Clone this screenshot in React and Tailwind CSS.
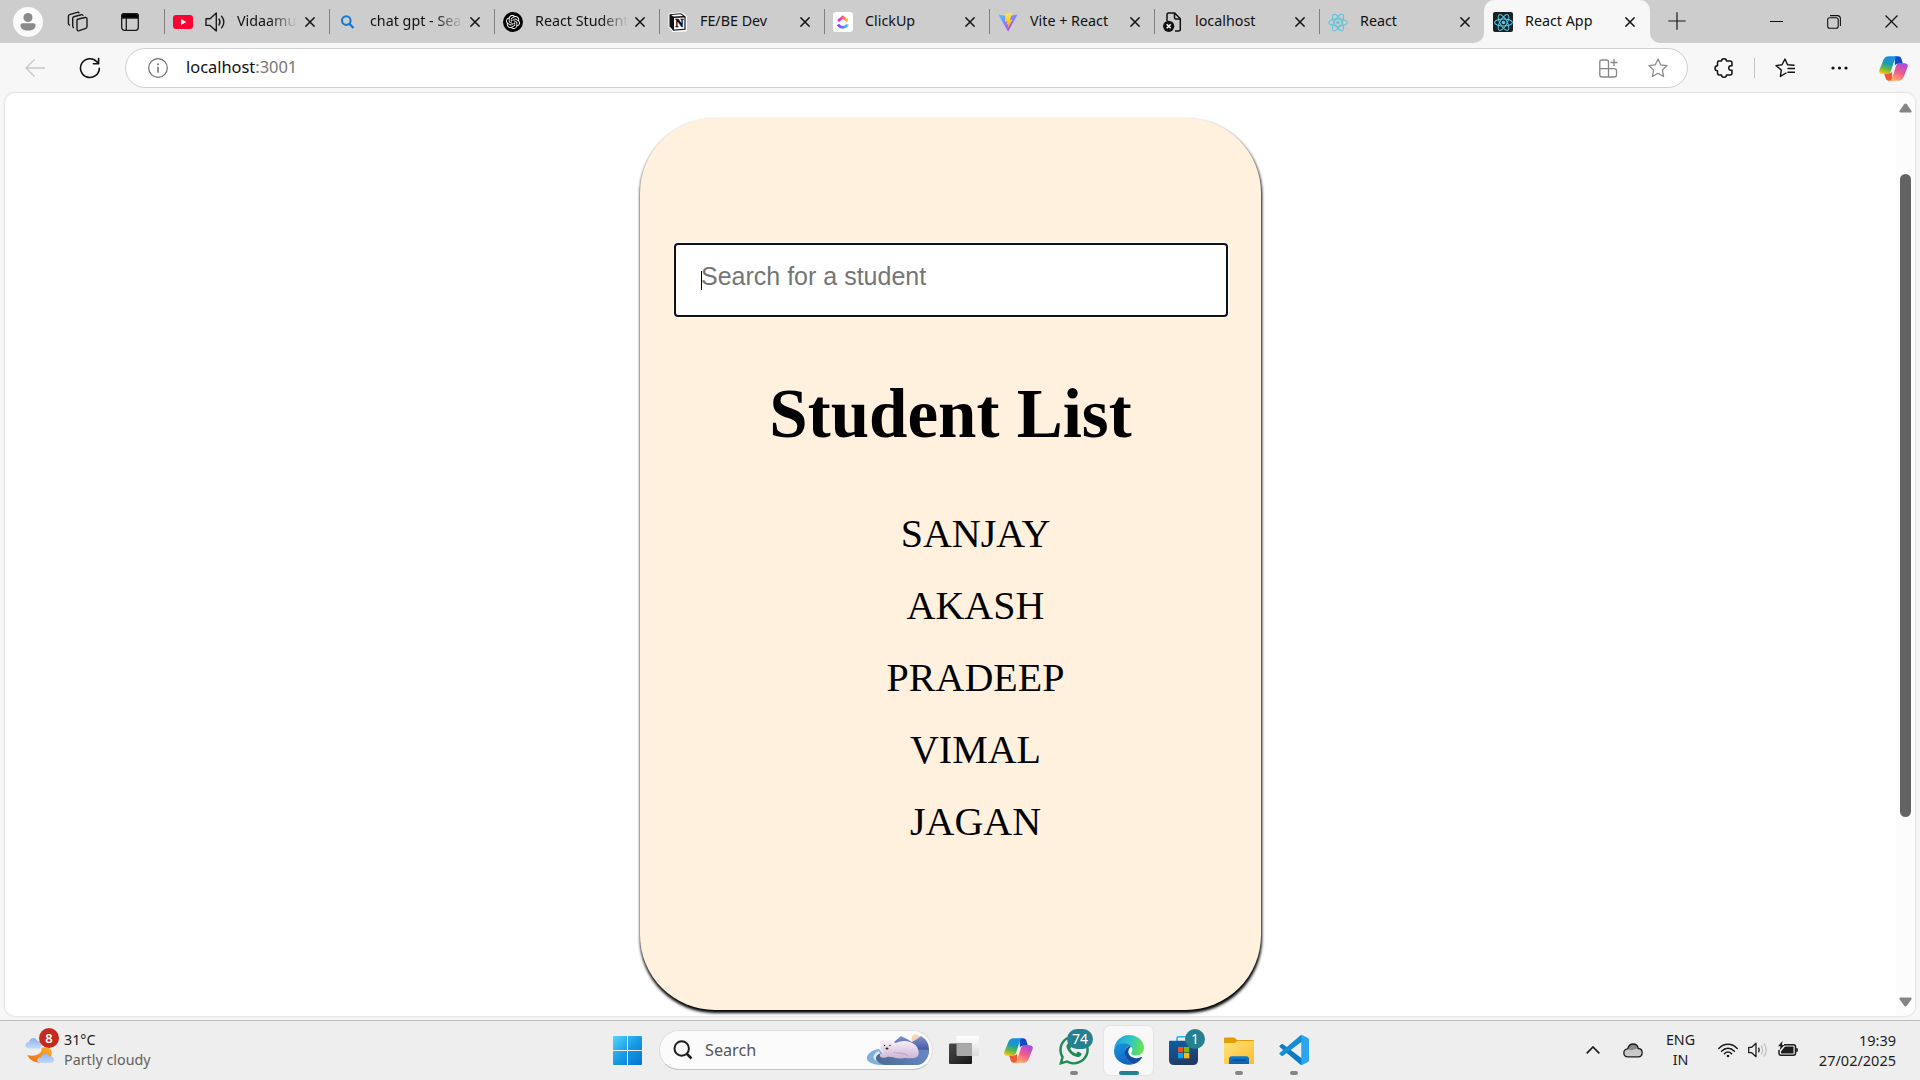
import React from "react";
import { SiOpenai } from "react-icons/si";
import { FaWhatsapp } from "react-icons/fa";

function Atom({ size, color, width = 1.2 }) {
  return (
    <svg width={size} height={size} viewBox="-12 -12 24 24" fill="none" stroke={color} strokeWidth={width}>
      <ellipse rx="11.2" ry="4.4" />
      <ellipse rx="11.2" ry="4.4" transform="rotate(60)" />
      <ellipse rx="11.2" ry="4.4" transform="rotate(120)" />
      <circle r="2.2" fill={color} stroke="none" />
    </svg>
  );
}

function Close({ size = 10, width = 1.5 }) {
  return (
    <svg width={size} height={size} viewBox="0 0 10 10" stroke="#111" strokeWidth={width} fill="none">
      <path d="M0.4 0.4L9.6 9.6M9.6 0.4L0.4 9.6" />
    </svg>
  );
}

function Copilot({ id }) {
  return (
    <svg width="29" height="27" viewBox="0 0 28 28" preserveAspectRatio="none">
      <defs>
        <linearGradient id={id + "a"} x1="0.6" y1="0" x2="0.3" y2="1">
          <stop offset="0" stopColor="#168df0" />
          <stop offset="0.4" stopColor="#1a9bb8" />
          <stop offset="0.72" stopColor="#63b845" />
          <stop offset="1" stopColor="#f5c50c" />
        </linearGradient>
        <linearGradient id={id + "b"} x1="0.8" y1="0" x2="0.3" y2="1">
          <stop offset="0" stopColor="#a44ae8" />
          <stop offset="0.5" stopColor="#f0598f" />
          <stop offset="1" stopColor="#ffad62" />
        </linearGradient>
      </defs>
      <path d="M15 1.200h3.600c1.600 0 2.500 1 3 2.600L23.100 9h-4.700c-1.700 0-2.600.8-3 2.200z" fill="#1548c4" />
      <path d="M13 26.800H9.400c-1.600 0-2.500-1-3-2.600L4.900 19h4.700c1.700 0 2.600-.8 3-2.200z" fill="#ee5a36" />
      <path d="M18.300 1.200H8.700C6 1.200 4.700 3.500 3.700 6.400 2.400 10.200.8 13.600.3 16c-.5 2.300.9 3.500 3 3.500h4.700c1.900 0 3-1 3.600-2.900l3.400-11.400c.6-2 1.500-3.500 3.300-4z" fill={"url(#" + id + "a)"} />
      <path d="M9.700 26.800h9.600c2.700 0 4-2.300 5-5.200 1.300-3.800 2.900-7.200 3.400-9.600.5-2.300-.9-3.500-3-3.500H20c-1.900 0-3 1-3.600 2.900l-3.400 11.400c-.6 2-1.500 3.500-3.300 4z" fill={"url(#" + id + "b)"} />
    </svg>
  );
}

const YouTube = () => (
  <svg width="20" height="20" viewBox="0 0 20 20">
    <rect y="3" width="20" height="14" rx="3" fill="#ff0033" />
    <path d="M8 7l5.300 3L8 13z" fill="#fff" />
  </svg>
);

const Bing = () => (
  <svg width="20" height="20" viewBox="0 0 20 20" fill="none" stroke="#1279d6" strokeWidth="2">
    <circle cx="8.300" cy="8.600" r="4.300" />
    <path d="M11.400 11.800l4.100 4.200" strokeWidth="2.300" />
  </svg>
);

const ChatGpt = () => (
  <span className="flex size-5 items-center justify-center rounded-full bg-black text-white">
    <SiOpenai size={14} />
  </span>
);

const Notion = () => (
  <svg width="20" height="20" viewBox="0 0 20 20">
    <path d="M0.500 1.500L13.500 0.300 19 4v14l-1.200 1.400L4.800 20 0.500 15z" fill="#fff" />
    <path d="M1.500 2.200L13 1.300l4.600 3.100v13.400L5.300 18.700 1.500 14.200z" fill="#111" />
    <path d="M3.200 2.900l9.400-.7 2.500 1.700-9.600.6zM6 6l10.400-.6v11.300L6 17.400z" fill="#fff" />
    <text x="11.300" y="15.400" textAnchor="middle" className="font-bold" fontFamily="Liberation Serif" fontSize="11.500" stroke="#111" strokeWidth="0.500">N</text>
  </svg>
);

const ClickUp = () => (
  <svg width="20" height="20" viewBox="0 0 20 20" fill="none" strokeWidth="2.700">
    <defs>
      <linearGradient id="cua"><stop stopColor="#ff02f0" /><stop offset="1" stopColor="#ffc800" /></linearGradient>
      <linearGradient id="cub"><stop stopColor="#8930fd" /><stop offset="1" stopColor="#49ccf9" /></linearGradient>
    </defs>
    <rect width="20" height="20" rx="3" fill="#fff" />
    <path d="M5.200 8.900L9.800 4.900 14.600 8.900" stroke="url(#cua)" />
    <path d="M4.800 12.700c2.800 3.500 7.300 3.500 10.100 0" stroke="url(#cub)" />
  </svg>
);

const Vite = () => (
  <svg width="21" height="20" viewBox="0 0 21 20">
    <defs>
      <linearGradient id="vta" x1="0" y1="0" x2="0.6" y2="1"><stop stopColor="#41d1ff" /><stop offset="1" stopColor="#bd34fe" /></linearGradient>
      <linearGradient id="vtb" x1="0" y1="0" x2="0" y2="1"><stop stopColor="#ffea53" /><stop offset="1" stopColor="#ffa800" /></linearGradient>
    </defs>
    <path d="M0.300 2.200L10.500 4l10-1.800L10.600 20z" fill="url(#vta)" />
    <path d="M15 0.100L7.900 1.500 7.300 9.700l2.500-.5-.8 3.600 1.700-.5-1 5.200 5.600-10.200-2.800.5z" fill="url(#vtb)" />
  </svg>
);

const BrokenPage = () => (
  <svg width="20" height="20" viewBox="0 0 20 20" fill="none" stroke="#111" strokeWidth="1.500">
    <path d="M4 9V2.700C4 1.700 4.600 1 5.500 1h6.200l5.600 5.700V17c0 1.300-.7 2-1.800 2H12M11.500 1v4.500c0 1 .5 1.500 1.500 1.500h4.300" />
    <circle cx="5.700" cy="14.300" r="5.600" fill="#111" stroke="none" />
    <path d="M3.700 12.300l4 4M7.700 12.300l-4 4" stroke="#fff" />
  </svg>
);

const AppFavicon = () => (
  <span className="flex size-5 items-center justify-center rounded-[2px] bg-[#1e1f23]">
    <Atom size={19} color="#52cbe6" width={1.3} />
  </span>
);

const TABS = [
  { icon: <YouTube />, title: "Vidaamu", sound: true },
  { icon: <Bing />, title: "chat gpt - Sea", fade: true },
  { icon: <ChatGpt />, title: "React Student", fade: true },
  { icon: <Notion />, title: "FE/BE Dev" },
  { icon: <ClickUp />, title: "ClickUp" },
  { icon: <Vite />, title: "Vite + React" },
  { icon: <BrokenPage />, title: "localhost" },
  { icon: <Atom size={21} color="#61c4dc" width={1.300} />, title: "React" },
  { icon: <AppFavicon />, title: "React App", active: true },
];

function Tab({ icon, title, sound, fade, active }) {
  return (
    <div className={"relative flex h-[43px] shrink-0 items-center " + (active ? "w-[166px] rounded-t-[10px] bg-[#f7f7f7]" : "w-[165px]")}>
      {!active && <span className="absolute top-[9px] left-0 h-[25px] w-px bg-[#808080]" />}
      {active && (
        <>
          <svg className="absolute bottom-0 -left-[10px]" width="10" height="10"><path d="M10 0v10H0A10 10 0 0 0 10 0" fill="#f7f7f7" /></svg>
          <svg className="absolute -right-[10px] bottom-0" width="10" height="10"><path d="M0 0v10h10A10 10 0 0 1 0 0" fill="#f7f7f7" /></svg>
        </>
      )}
      <span className="mt-px ml-[9px] flex w-5 shrink-0 justify-center">{icon}</span>
      {sound && (
        <svg className="ml-3 shrink-0" width="20" height="20" viewBox="0 0 20 20" fill="none" stroke="#1a1a1a" strokeWidth="1.400" strokeLinejoin="round" strokeLinecap="round">
          <path d="M1 6.800h4L11.300 1v18L5 13.400H1zM14 7c1.200 1.800 1.200 4.200 0 6M16.600 4.200c3 3.400 3 8.200 0 11.600" />
        </svg>
      )}
      <span className={"mb-px ml-3 text-[14.3px] whitespace-nowrap text-[#111] " + (sound ? "[mask-image:linear-gradient(90deg,#000_32px,transparent_60px)]" : "") + (fade ? "[mask-image:linear-gradient(90deg,#000_66px,transparent_93px)]" : "")}>
        {title}
      </span>
      <span className="absolute top-[17px] left-[141px]"><Close /></span>
    </div>
  );
}

function TabStrip() {
  return (
    <div className="flex h-[43px] items-center bg-[#cdcdcd]">
      <span className="ml-[13px] flex size-[30px] items-center justify-center rounded-full bg-[#fafafa]">
        <svg width="16" height="18" viewBox="0 0 16 18" fill="#8a8a8a"><circle cx="8" cy="4.500" r="4.500" /><path d="M2.500 10.200h11c1.200 0 2 .8 2 2 0 3.300-3 5.300-7.500 5.300s-7.500-2-7.500-5.300c0-1.200.8-2 2-2z" /></svg>
      </span>
      <svg className="ml-6" width="21" height="21" viewBox="0 0 21 21" fill="none" stroke="#1a1a1a" strokeWidth="1.400" strokeLinejoin="round">
        <path d="M10.500 8.300l7.500-1.800c1.200-.3 2 .3 2 1.500v7.500c0 .9-.4 1.500-1.200 1.800l-6.600 2.400c-1.200.4-2.200-.2-2.200-1.400V9c0-.4.200-.6.500-.7z" />
        <path d="M7 16.800c-1-.2-1.300-.8-1.300-1.700V7.300c0-.8.400-1.400 1.200-1.600l7.300-2c1-.2 1.700.2 2 1" />
        <path d="M3 14.200c-1-.2-1.600-.8-1.600-1.700V5.200c0-.8.400-1.400 1.200-1.600l7.600-2.200c1-.3 1.700.1 2 .9" />
      </svg>
      <svg className="ml-[33px]" width="18" height="18" viewBox="0 0 18 18" fill="none" stroke="#1a1a1a" strokeWidth="1.300">
        <rect x="0.700" y="0.700" width="16.600" height="16.600" rx="2.700" />
        <path d="M0.700 5V3C.7 1.500 1.500.7 3 .7h12c1.500 0 2.300.8 2.300 2.300v2z" fill="#000" />
        <path d="M5.300 5v12" />
      </svg>
      <div className="ml-[25px] flex">
        {TABS.map((t) => <Tab key={t.title} {...t} />)}
      </div>
      <svg className="-mt-[2px] ml-[18px]" width="18" height="18" viewBox="0 0 18 18" stroke="#1a1a1a" strokeWidth="1.200"><path d="M9 0.300v17.400M0.300 9h17.400" /></svg>
      <div className="mr-[22px] ml-auto flex items-center gap-11">
        <span className="h-px w-[13px] bg-[#111]" />
        <svg width="14" height="14" viewBox="0 0 14 14" fill="none" stroke="#111" strokeWidth="1.100"><rect x="0.700" y="2.800" width="10.500" height="10.500" rx="2" /><path d="M3 .6h7.300c1.900 0 3.100 1.200 3.100 3.100V11" /></svg>
        <Close size={13} width={0.9} />
      </div>
    </div>
  );
}

const STAR = "M10 1l2.700 5.800 6.300.8-4.600 4.400 1.200 6.400L10 15.300l-5.600 3.100L5.600 12 1 7.600l6.300-.8z";

function Toolbar() {
  return (
    <div className="flex h-[50px] shrink-0 items-center bg-[#f7f7f7]">
      <svg className="ml-[25px]" width="20" height="18" viewBox="0 0 20 18" fill="none" stroke="#c8c8c8" strokeWidth="1.400"><path d="M20 9H1M9.500 0.500L1 9l8.500 8.500" /></svg>
      <svg className="ml-[34px]" width="22" height="22" viewBox="0 0 22 22" fill="none" stroke="#111" strokeWidth="1.600" strokeLinecap="round" strokeLinejoin="round"><path d="M20.300 11.200a9.400 9.400 0 1 1-2.500-6.500L19.300 6.500M19.600 1.600v5.200h-5.200" /></svg>
      <div className="ml-6 flex h-10 w-[1563px] items-center rounded-full border border-[#cfcfcf] bg-white">
        <svg className="ml-[22px]" width="20" height="20" viewBox="0 0 20 20" fill="none" stroke="#6d6d6d" strokeWidth="1.200"><circle cx="10" cy="10" r="9.300" /><path d="M10 8.800v6" strokeWidth="1.500" /><circle cx="10" cy="6.200" r="1" fill="#6d6d6d" stroke="none" /></svg>
        <div className="mb-px ml-[18px] text-[16.400px] text-[#111]">localhost<span className="text-[#767676]">:3001</span></div>
        <svg className="ml-auto" width="19" height="19" viewBox="0 0 19 19" fill="none" stroke="#858585" strokeWidth="1.300"><path d="M9.500 9.700H.8V3C.8 1.700 1.500 1 2.800 1h4.700c1.300 0 2 .7 2 2v15M.8 9.700v6c0 1.500.8 2.300 2.300 2.300H15c1.700 0 2.500-.8 2.500-2.300v-3.700c0-1.500-.8-2.300-2.300-2.300H9.500M15 0v7M11.500 3.500h7" /></svg>
        <svg className="mr-[19px] ml-[30px]" width="20" height="20" viewBox="0 0 20 20" fill="none" stroke="#858585" strokeWidth="1.200" strokeLinejoin="round"><path d={STAR} /></svg>
      </div>
      <svg className="ml-[26px]" width="20" height="20" viewBox="0 0 20 20" fill="none" stroke="#111" strokeWidth="1.500" strokeLinejoin="round"><path d="M5 3h2.500c0-3 5-3 5 0H16c1.200 0 2 .8 2 2v2.700h-1c-3 0-3 4.600 0 4.600h1V15c0 1.200-.8 2-2 2h-3.500c0 3-5 3-5 0H5.500c-1.200 0-2-.8-2-2v-2.300c-3.300 0-3.300-5 0-5V4.700C3.500 3.600 4 3 5 3z" /></svg>
      <span className="ml-5 h-5 w-px bg-[#c4c4c4]" />
      <svg className="ml-5" width="20" height="20" viewBox="0 0 20 20" fill="none" stroke="#111" strokeWidth="1.400" strokeLinejoin="round" strokeLinecap="round"><path d="M11 15l-5.600 3.400L6.300 12 1 7.600l6-.8L10 1l2.500 5.700 6.500.6M13 10.500h6.500M13 14.300h6.500" /></svg>
      <svg className="ml-9" width="17" height="4" viewBox="0 0 17 4" fill="#111"><circle cx="2" cy="2" r="1.600" /><circle cx="8.500" cy="2" r="1.600" /><circle cx="15" cy="2" r="1.600" /></svg>
      <span className="ml-[31px]"><Copilot id="cpa" /></span>
    </div>
  );
}

const STUDENTS = ["SANJAY", "AKASH", "PRADEEP", "VIMAL", "JAGAN"];

function Page() {
  return (
    <main className="mx-[5px] flex h-[923px] shrink-0 overflow-hidden rounded-[10px] bg-white shadow-[0_0_2px_1px_#e2e2e2]">
      <div className="flex flex-1 justify-center pt-[25px]">
        <section className="h-[892px] w-[621px] rounded-[75px] bg-[#fff1de] px-[36px] pt-[127px] font-['Liberation_Serif',serif] text-black shadow-[0.5px_2.5px_3px_0px_#000]">
          <div className="flex h-[70px] w-[550px] items-start rounded-[2px] bg-white pt-[17px] pl-[25px] font-['Liberation_Sans',sans-serif] outline-2 outline-[#101010] ring-[3px] ring-white">
            <span className="mt-[9px] -mr-px h-[19px] w-px bg-black" />
            <span className="text-[25px] leading-[29px] text-[#757575]">Search for a student</span>
          </div>
          <h1 className="mt-[59px] text-center text-[69px] leading-[80px] font-bold">Student List</h1>
          <ul className="mt-[44px] pl-[50px] text-center text-[40px] leading-[72px]">
            {STUDENTS.map((s) => <li key={s}>{s}</li>)}
          </ul>
        </section>
      </div>
      <div className="flex w-[19px] flex-col items-center bg-[#fcfcfc]">
        <svg className="mt-[10px]" width="13" height="10" viewBox="0 0 13 10"><path d="M5.200 1.200q1.300-1.600 2.600 0l4.600 6.600q.8 1.700-1 1.700H1.600q-1.800 0-1-1.700z" fill="#858585" /></svg>
        <span className="mt-[61px] h-[643px] w-[11px] rounded-full bg-[#636363]" />
        <svg className="mt-[180px] rotate-180" width="13" height="10" viewBox="0 0 13 10"><path d="M5.200 1.200q1.300-1.600 2.600 0l4.600 6.600q.8 1.700-1 1.700H1.600q-1.800 0-1-1.700z" fill="#858585" /></svg>
      </div>
    </main>
  );
}

function Slot({ children, badge, mark }) {
  return (
    <div className={"relative flex h-[49px] w-[49px] items-center justify-center " + (mark === "active" ? "rounded-[6px] bg-[#f8f8f8] shadow-[0_0_1px_1px_#e4e4e4]" : "")}>
      {children}
      {badge && <span className={"absolute top-[3px] flex h-5 items-center justify-center rounded-full bg-[#25808f] text-[14px] text-white " + (badge.length > 1 ? "left-[18px] w-[26px]" : "left-[26px] w-5")}>{badge}</span>}
      {mark === "open" && <span className="absolute bottom-0 h-1 w-2 rounded-full bg-[#868686]" />}
      {mark === "active" && <span className="absolute bottom-0 h-1 w-5 rounded-full bg-[#25808f]" />}
    </div>
  );
}

const Weather = () => (
  <svg width="30" height="30" viewBox="0 0 30 30">
    <defs>
      <linearGradient id="wc" x1="0" y1="0" x2="0" y2="1"><stop stopColor="#8db3ee" /><stop offset="1" stopColor="#c3dafa" /></linearGradient>
      <linearGradient id="wm" x1="0" y1="1" x2="1" y2="0"><stop stopColor="#ec6c14" /><stop offset="1" stopColor="#fbb02c" /></linearGradient>
    </defs>
    <path d="M2.500 20c8 2.500 15.500-2 14-7C28 9 30 21 22 25.500 15 30 5 27 2.500 20z" fill="url(#wm)" />
    <path d="M4 13.500c-5 0-5-6 0-6.200C5 2 11 1.800 12.500 6 17 5.500 18 12.500 14 13.500z" fill="url(#wc)" />
    <path d="M16 28c-5 0-5-5.500 0-5.700 1-4.800 7-5 8-1 6-.2 6.500 6 2 6.700z" fill="url(#wc)" />
  </svg>
);

const Windows = () => (
  <svg width="29" height="29" viewBox="0 0 29 29">
    <defs><linearGradient id="wn" x1="0" y1="0" x2="29" y2="29" gradientUnits="userSpaceOnUse"><stop stopColor="#53d4fd" /><stop offset="0.500" stopColor="#189be4" /><stop offset="1" stopColor="#0373d2" /></linearGradient></defs>
    <path d="M1 0h13v14H0V1q0-1 1-1zM15 0h13q1 0 1 1v13H15zM0 15h14v14H1q-1 0-1-1zM15 15h14v13q0 1-1 1H15z" fill="url(#wn)" />
  </svg>
);

const Bear = () => (
  <svg width="64" height="32" viewBox="0 0 64 32">
    <defs>
      <linearGradient id="bm" x1="0" y1="0" x2="0" y2="1"><stop stopColor="#8193cf" /><stop offset="0.500" stopColor="#4d5ba8" /><stop offset="1" stopColor="#a5c3e6" /></linearGradient>
      <linearGradient id="bi" x1="0" y1="0" x2="1" y2="0"><stop stopColor="#4b6991" /><stop offset="1" stopColor="#6687c2" /></linearGradient>
      <linearGradient id="bb" x1="0" y1="0" x2="0" y2="1"><stop stopColor="#fbf3fb" /><stop offset="1" stopColor="#cdb5d4" /></linearGradient>
    </defs>
    <circle cx="50" cy="5" r="4.500" fill="#f7d4b0" />
    <path d="M28 8l7-6 6 3 5 3 5-3 4-3 4 3c3 3 4 7 4 12s-3 11-8 11z" fill="url(#bm)" />
    <path d="M13 15C5 16 0 21 1 25s8 6 16 6h10z" fill="#7fb0dc" />
    <path d="M13 17c-5 2-7 6-4 9s8 4 14 5l-8-9z" fill="#d8edf8" />
    <path d="M13 20c10-4 38-5 50-4-1 10-6 15-12 15H21c-9 0-15-7-8-11z" fill="url(#bi)" />
    <path d="M14 8c0-3 3-3 4-1.500 2-.6 4-.6 5.500 0C25 4.500 28 5.500 27 8l1 2c6-4 15-4 20 0 5 3 6 11 3 13-3 2-10 1-13 1-6 2-13-2-17-1-4 2-8 0-7-2 0-2 3-2 4-3-4-2-4-5-3-7z" fill="url(#bb)" />
    <path d="M27 18c6 3 10-1 15 4" fill="none" stroke="#c7acd0" strokeWidth="1.300" />
    <circle cx="18.500" cy="11.500" r="0.700" fill="#222" /><circle cx="24" cy="11.500" r="0.700" fill="#222" />
    <ellipse cx="21" cy="14.500" rx="1.500" ry="1.100" fill="#222" />
  </svg>
);

const TaskView = () => (
  <svg width="30" height="28" viewBox="0 0 30 28">
    <defs>
      <linearGradient id="tva" x1="0" y1="0" x2="1" y2="1"><stop stopColor="#4a4a4a" /><stop offset="1" stopColor="#161616" /></linearGradient>
      <linearGradient id="tvb" x1="0" y1="0" x2="0" y2="1"><stop stopColor="#fff" /><stop offset="1" stopColor="#dcdcdc" /></linearGradient>
    </defs>
    <rect x="7.500" width="22.500" height="20" rx="1" fill="url(#tvb)" />
    <rect y="7.500" width="23" height="20.500" rx="1" fill="url(#tva)" />
    <path d="M7.500 7.500H22q1 0 1 1V20H8.500q-1 0-1-1z" fill="#a9a9a9" />
  </svg>
);

const Edge = () => (
  <svg width="30" height="30" viewBox="0 0 30 30">
    <defs>
      <linearGradient id="ega" x1="0" y1="0.300" x2="1" y2="0.500"><stop stopColor="#1f9fe0" /><stop offset="0.500" stopColor="#2fc3c8" /><stop offset="1" stopColor="#6be34a" /></linearGradient>
      <linearGradient id="egb" x1="0" y1="0" x2="0.600" y2="1"><stop stopColor="#1a98dc" /><stop offset="1" stopColor="#0f62c0" /></linearGradient>
    </defs>
    <path d="M0.300 13C1.500 5.500 7.500 0 15 0c8.500 0 15 6 15 12.800 0 5-3.800 7.700-8 7.700-3.800 0-5.200-1.500-4.600-2.700 1.500-2 1.200-5-1-6.800C11 7 3.500 8.500.3 13z" fill="url(#ega)" />
    <path d="M0 15.500C.3 11 4.500 8.200 9.500 8.200c3.500 0 6.500 1.300 8 4-4-2.200-6.500 1-6.500 5.500 0 5.500 3.500 9.800 9 11.400C10 32-.5 25.500 0 15.500z" fill="url(#egb)" />
    <path d="M15 11.300c-3 1.300-4.200 4-4.200 6.700 0 6 5.500 10.500 9.200 11.100 3.500-1.200 6.200-3.600 7.900-6.400.3-.6-.2-1-.8-.7-6.500 3.200-12.800-.6-12.800-5.200 0-2.200 1.200-3.800 2.500-4.700-.5-.5-1.100-.8-1.800-.8z" fill="#104f9f" />
  </svg>
);

const Store = () => (
  <svg width="29" height="29" viewBox="0 0 29 29">
    <defs><linearGradient id="st" x1="0" y1="0" x2="0.400" y2="1"><stop stopColor="#0e5fa6" /><stop offset="1" stopColor="#233a66" /></linearGradient></defs>
    <path d="M8 5V2.500C8 1.300 8.700.8 9.700.8h9.600c1 0 1.700.5 1.700 1.700V5" fill="none" stroke="#27b3f3" strokeWidth="1.600" />
    <path d="M0 5.500Q0 4.700.8 4.700h27.400q.8 0 .8.800V24q0 5-5 5H5q-5 0-5-5z" fill="url(#st)" />
    <path d="M9 11h5.300v5.300H9z" fill="#f25022" /><path d="M15 11h5.300v5.300H15z" fill="#7fba00" /><path d="M9 17h5.300v5.300H9z" fill="#00a4ef" /><path d="M15 17h5.300v5.300H15z" fill="#ffb900" />
  </svg>
);

const Folder = () => (
  <svg width="30" height="27" viewBox="0 0 30 27">
    <defs>
      <linearGradient id="fd" x1="0" y1="0" x2="1" y2="1"><stop stopColor="#ffe27c" /><stop offset="1" stopColor="#fbbd2a" /></linearGradient>
      <linearGradient id="fb" x1="0" y1="0" x2="0" y2="1"><stop stopColor="#0d7ad0" /><stop offset="1" stopColor="#1261ad" /></linearGradient>
    </defs>
    <path d="M0 1.500Q0 .5 1 .5h8.500q1 0 1.800.8L13 3h16q1 0 1 1v8H0z" fill="#e09d07" />
    <path d="M0 6h10q1 0 1.800-.7L13.500 4H29q1 0 1 1v21q0 1-1 1H1q-1 0-1-1z" fill="url(#fd)" />
    <path d="M5 27v-5q0-2.700 2.700-2.700h14.600Q25 19.300 25 22v5z" fill="url(#fb)" />
    <path d="M8.500 23h13" stroke="#073e78" strokeWidth="1" />
  </svg>
);

const VsCode = () => (
  <svg width="30" height="30" viewBox="0 0 30 30">
    <path d="M.7 10.700l1.700-1.500q.8-.6 1.600 0L23 23.500V29.800q-1 .4-2-.5L.7 11.900q-.7-.6 0-1.200z" fill="#0b79c4" />
    <path d="M.7 19.300l1.700 1.500q.8.600 1.600 0L23 6.500V.2q-1-.4-2 .5L.7 18.100q-.7.600 0 1.200z" fill="#148cd6" />
    <path d="M21.500.4Q22.300-.2 23.500.3l5.500 2.600q1 .5 1 1.700v20.800q0 1.200-1 1.700l-5.500 2.600q-1.200.5-2-.1.800.2.800-.9V1.300q0-1.100-.8-.9z" fill="#2ba5ee" />
  </svg>
);

function Taskbar() {
  return (
    <footer className="flex h-[60px] shrink-0 items-center border-t border-[#bcbcbc] bg-[#eee] pb-px text-[14.300px] leading-5 text-[#1c1c1c]">
      <div className="relative ml-[25px] flex w-[585px] items-center">
        <Weather />
        <span className="absolute -top-[2px] left-[14px] flex size-5 items-center justify-center rounded-full bg-[#c42b1c] text-[13px] font-semibold text-white">8</span>
        <div className="ml-[9px]">
          <div>31°C</div>
          <div className="text-[#616161]">Partly cloudy</div>
        </div>
      </div>
      <span className="ml-[3px]"><Windows /></span>
      <div className="ml-[17px] flex h-10 w-[274px] items-center rounded-full border border-[#dedede] border-b-[#c4c4c4] bg-[#fbfbfb]">
        <svg className="ml-[13px]" width="20" height="20" viewBox="0 0 20 20" fill="none" stroke="#1c1c1c" strokeWidth="2"><circle cx="8.700" cy="8.500" r="7.200" /><path d="M13.500 13.500l5 5" strokeWidth="2.500" /></svg>
        <span className="ml-3 text-[16.2px] text-[#555]">Search</span>
        <span className="mr-[2px] ml-auto"><Bear /></span>
      </div>
      <div className="ml-[6px] flex gap-[6px]">
        <Slot><TaskView /></Slot>
        <Slot><Copilot id="cpb" /></Slot>
        <Slot badge="74" mark="open"><FaWhatsapp size={34} color="#1f8a55" /></Slot>
        <Slot mark="active"><Edge /></Slot>
        <Slot badge="1"><span className="mt-px"><Store /></span></Slot>
        <Slot mark="open"><Folder /></Slot>
        <Slot mark="open"><VsCode /></Slot>
      </div>
      <svg className="ml-auto" width="14" height="8" viewBox="0 0 14 8" fill="none" stroke="#1c1c1c" strokeWidth="1.700"><path d="M0.700 7.300L7 1l6.300 6.300" /></svg>
      <svg className="ml-[23px]" width="20" height="15" viewBox="0 0 20 15">
        <path d="M5 13.800c-5.500 0-5.500-7.500-.3-8C6.500-.6 14-.5 15.300 5.500c5.200.3 5 8.300 0 8.300z" fill="#c9c9c9" />
        <path d="M4.700 5.800C6.500-.6 14-.5 15.300 5.500c-3.500 0-7 3.500-10.300.3z" fill="#8b8b8b" />
        <path d="M5 13.800c-5.500 0-5.500-7.500-.3-8C6.500-.6 14-.5 15.300 5.500c5.200.3 5 8.300 0 8.300z" fill="none" stroke="#1c1c1c" strokeWidth="1.300" />
      </svg>
      <div className="ml-[22px] w-[31px] text-center">ENG<br />IN</div>
      <svg className="ml-[22px]" width="20" height="15" viewBox="0 0 20 15" fill="none" stroke="#1c1c1c" strokeWidth="1.500" strokeLinecap="round"><path d="M0.800 5.400c5.200-5.500 13.200-5.500 18.400 0M3.600 8.200c3.700-3.900 9.100-3.900 12.800 0M6.400 10.800c2-2.300 5.200-2.300 7.200 0" /><circle cx="10" cy="13" r="1.300" fill="#1c1c1c" stroke="none" /></svg>
      <svg className="ml-[10px]" width="20" height="16" viewBox="0 0 20 16" fill="none" stroke="#1c1c1c" strokeWidth="1.300" strokeLinejoin="round"><path d="M.7 5.300h3L8 1.300v13.400l-4.300-4h-3zM10.500 5.700c1 1.500 1 3.100 0 4.600" /><path d="M13 3.500c2 2.700 2 6.300 0 9M15.800 1.300c3.200 4 3.200 9.400 0 13.400" stroke="#c0c0c0" /></svg>
      <svg className="mb-[2px] ml-[10px]" width="20" height="16" viewBox="0 0 20 16"><path d="M6 3.800h9.500q2 0 2 2v6.400q0 2-2 2H3q-2 0-2-2V9" fill="none" stroke="#1c1c1c" strokeWidth="1.500" /><path d="M7 5.500h8.500v7H3v-2zM18.200 7h.6q1.200 0 1.200 2t-1.200 2h-.6zM4.500 0L0 5.300h2.600L1.500 9.500l5-5.500H4z" fill="#1c1c1c" /></svg>
      <div className="-mt-px mr-6 ml-[14px] w-[84px] text-right text-[14.500px] whitespace-nowrap">19:39<br />27/02/2025</div>
    </footer>
  );
}

export default function App() {
  return (
    <div className="flex h-[1080px] w-[1920px] flex-col overflow-hidden bg-[#f7f7f7] font-['Noto_Sans','Open_Sans',sans-serif]">
      <TabStrip />
      <Toolbar />
      <Page />
      <div className="h-1 shrink-0" />
      <Taskbar />
    </div>
  );
}
